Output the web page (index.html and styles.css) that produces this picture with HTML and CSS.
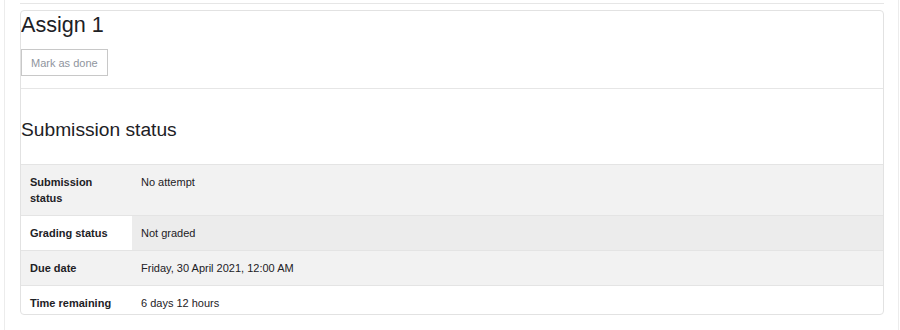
FILE: index.html
```html
<!DOCTYPE html>
<html lang="en">
<head>
  <meta charset="UTF-8" />
  <meta name="viewport" content="width=device-width, initial-scale=1.0" />
  <title>Assign 1</title>
  <link rel="stylesheet" href="styles.css">
</head>
<body>
  <div class="page">
    <div class="top-rule"></div>

    <!-- Activity card -->
    <div class="card">
      <div class="card-header">
        <h2>Assign 1</h2>
        <button class="btn-done">Mark as done</button>
      </div>

      <h3>Submission status</h3>
      <table class="status-table">
        <tbody>
          <tr class="row-grey">
            <th>Submission status</th>
            <td>No attempt</td>
          </tr>
          <tr class="row-mixed">
            <th>Grading status</th>
            <td>Not graded</td>
          </tr>
          <tr class="row-grey">
            <th>Due date</th>
            <td>Friday, 30 April 2021, 12:00 AM</td>
          </tr>
          <tr class="row-last">
            <th>Time remaining</th>
            <td>6 days 12 hours</td>
          </tr>
        </tbody>
      </table>
    </div>
  </div>
</body>
</html>
```

FILE: styles.css
```css
* {
  box-sizing: border-box;
  font-family: "Liberation Sans", Arial, sans-serif;
}
body {
  margin: 0;
  background-color: #ffffff;
  color: #1d2125;
  font-size: 11px;
}
.page {
  margin-left: 4px;
  width: 895px;
  height: 330px;
  border-left: 1px solid #ececec;
  border-right: 1px solid #ececec;
  padding: 0 14px 0 15px;
}
.top-rule {
  height: 4px;
  border-bottom: 1px solid #e6e6e6;
  margin-bottom: 6px;
}
.card {
  border: 1px solid #e2e2e2;
  border-radius: 4px;
  overflow: hidden;
}
.card-header {
  padding: 0 0 12px 0;
  border-bottom: 1px solid #e6e6e6;
}
h2 {
  margin: 0;
  padding-top: 1px;
  font-size: 21.6px;
  font-weight: normal;
  line-height: 26px;
}
.btn-done {
  margin: 11px 0 0 0;
  height: 27px;
  padding: 0 9px;
  background: #ffffff;
  border: 1px solid #c8c8c8;
  color: #8f959e;
  font-size: 11px;
  line-height: 16px;
}
h3 {
  margin: 29px 0 23px 0;
  font-size: 19.2px;
  font-weight: normal;
  line-height: 23.4px;
}
.status-table {
  width: 100%;
  border-collapse: collapse;
}
.status-table th,
.status-table td {
  padding: 9px;
  border-top: 1px solid #e4e4e4;
  text-align: left;
  vertical-align: top;
  line-height: 16px;
  font-size: 11px;
}
.status-table th {
  width: 111px;
  font-weight: bold;
}
.row-grey th,
.row-grey td {
  background-color: #f2f2f2;
}
.row-mixed th {
  background-color: #ffffff;
}
.row-mixed td {
  background-color: #ececec;
}
.row-last th,
.row-last td {
  padding-bottom: 3px;
}
```
